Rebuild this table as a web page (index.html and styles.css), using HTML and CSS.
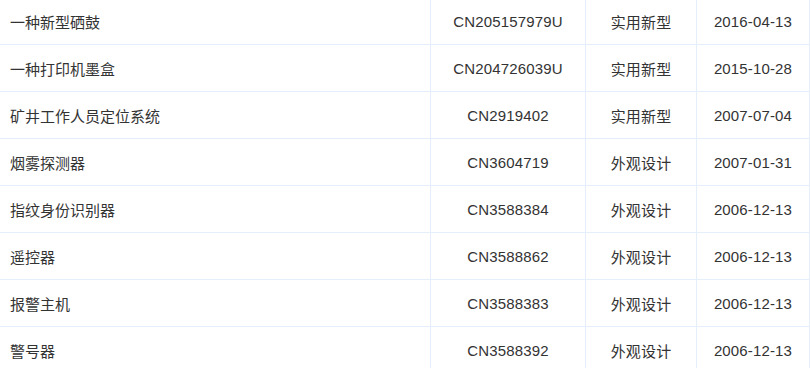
FILE: index.html
```html
<!DOCTYPE html>
<html lang="zh-CN">
<head>
<meta charset="utf-8">
<title>专利列表</title>
<link rel="stylesheet" href="styles.css">
</head>
<body>
<div class="table">
  <div class="row"><div class="cell name">一种新型硒鼓</div><div class="cell">CN205157979U</div><div class="cell">实用新型</div><div class="cell">2016-04-13</div></div>
  <div class="row"><div class="cell name">一种打印机墨盒</div><div class="cell">CN204726039U</div><div class="cell">实用新型</div><div class="cell">2015-10-28</div></div>
  <div class="row"><div class="cell name">矿井工作人员定位系统</div><div class="cell">CN2919402</div><div class="cell">实用新型</div><div class="cell">2007-07-04</div></div>
  <div class="row"><div class="cell name">烟雾探测器</div><div class="cell">CN3604719</div><div class="cell">外观设计</div><div class="cell">2007-01-31</div></div>
  <div class="row"><div class="cell name">指纹身份识别器</div><div class="cell">CN3588384</div><div class="cell">外观设计</div><div class="cell">2006-12-13</div></div>
  <div class="row"><div class="cell name">遥控器</div><div class="cell">CN3588862</div><div class="cell">外观设计</div><div class="cell">2006-12-13</div></div>
  <div class="row"><div class="cell name">报警主机</div><div class="cell">CN3588383</div><div class="cell">外观设计</div><div class="cell">2006-12-13</div></div>
  <div class="row"><div class="cell name">警号器</div><div class="cell">CN3588392</div><div class="cell">外观设计</div><div class="cell">2006-12-13</div></div>
</div>
</body>
</html>
```
FILE: styles.css
```css
html, body {
  margin: 0;
  padding: 0;
  background: #fff;
  overflow: hidden;
}
.table {
  margin-top: -2px;
  width: 810px;
  font-family: "Liberation Sans", "Noto Sans CJK SC", sans-serif;
  font-size: 15px;
  color: #333;
}
.row {
  display: grid;
  grid-template-columns: 431px 155px 111px 113px;
  height: 47px;
  box-sizing: border-box;
  border-bottom: 1px solid #e5eefb;
}
.cell {
  box-sizing: border-box;
  border-right: 1px solid #e5eefb;
  display: flex;
  align-items: center;
  justify-content: center;
  white-space: nowrap;
  letter-spacing: 0.15px;
}
.cell.name {
  justify-content: flex-start;
  padding-left: 10px;
  letter-spacing: 0;
}
```
